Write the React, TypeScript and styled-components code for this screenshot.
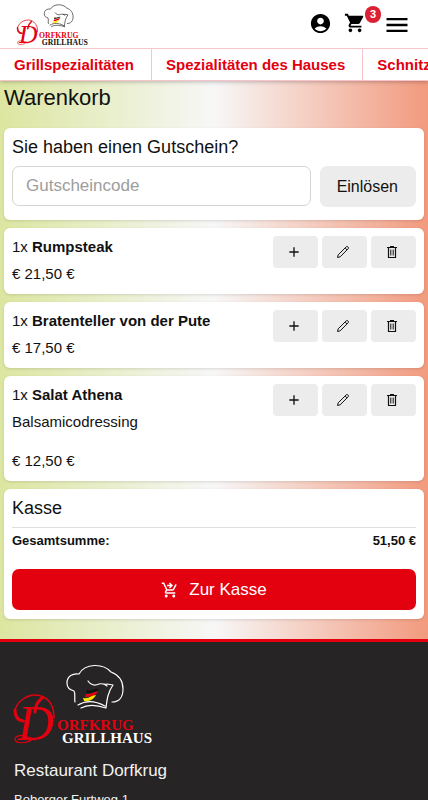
import React from "react";
import styled, { createGlobalStyle } from "styled-components";
import {
  MdAccountCircle,
  MdAdd,
  MdMenu,
  MdShoppingCart,
  MdShoppingCartCheckout,
} from "react-icons/md";

const RED = "#e3000f";
const PINK = "#f8c4cb";

const GlobalStyle = createGlobalStyle`
  *, *::before, *::after { box-sizing: border-box; }
  body {
    margin: 0;
    font-family: "Liberation Sans", Arial, sans-serif;
    color: #111;
    background: #262424;
  }
  h1, h2, h3, p, ul { margin: 0; padding: 0; font-weight: 400; }
  button, input { font-family: inherit; color: inherit; }
  a { color: inherit; text-decoration: none; }
`;

const Page = styled.div`
  height: 100vh;
  overflow: hidden;
`;

const Header = styled.header`
  position: relative;
  background: #fff;
  border-bottom: 1px solid ${PINK};
  box-shadow: 0 1px 4px rgba(0, 0, 0, 0.25);
`;

const TopBar = styled.div`
  display: flex;
  align-items: flex-start;
  justify-content: space-between;
  height: 48px;
  padding: 4px 21px 0 17px;
`;

const LogoLink = styled.a<{ $width: number }>`
  display: block;
  width: ${(p) => p.$width}px;
  svg { display: block; width: 100%; height: auto; overflow: visible; }
`;

const HeaderActions = styled.div`
  display: flex;
  align-items: center;
  gap: 12px;
  height: 38px;
`;

const IconButton = styled.button`
  position: relative;
  display: flex;
  padding: 0;
  border: 0;
  background: none;
  color: #000;
  cursor: pointer;
`;

const MenuButton = styled(IconButton)`
  margin: 4px -4px 0 5px;
`;

const Badge = styled.span`
  position: absolute;
  top: -6px;
  right: -15px;
  width: 16px;
  height: 17px;
  border-radius: 8px;
  background: #dc2232;
  color: #fff;
  font-size: 11px;
  font-weight: 700;
  line-height: 17px;
  text-align: center;
`;

const CategoryNav = styled.nav`
  display: flex;
  overflow: hidden;
  border-top: 1px solid ${PINK};
`;

const CategoryLink = styled.a`
  flex: none;
  padding: 0 17px 0 14px;
  border-right: 1px solid ${PINK};
  color: ${RED};
  font-size: 15px;
  font-weight: 700;
  line-height: 31px;
`;

const Main = styled.main`
  display: flex;
  flex-direction: column;
  gap: 8px;
  padding: 3px 4px 20px;
  background: linear-gradient(90deg, #dce6a0 0%, #f7f7f7 50%, #f29a7e 100%);
`;

const PageTitle = styled.h1`
  font-size: 22px;
  line-height: 28px;
  margin-bottom: 8px;
`;

const Card = styled.section`
  padding: 8px;
  border-radius: 6px;
  background: #fff;
  box-shadow: 0 1px 3px rgba(0, 0, 0, 0.12);
`;

const CardTitle = styled.h2`
  font-size: 18px;
  line-height: 22px;
`;

const VoucherCard = styled(Card)`
  padding-bottom: 13px;
`;

const VoucherForm = styled.form`
  display: flex;
  align-items: flex-start;
  gap: 9px;
  margin-top: 8px;
`;

const VoucherInput = styled.input`
  flex: 1;
  min-width: 0;
  height: 40px;
  padding: 0 13px;
  border: 1px solid #d4d4d4;
  border-radius: 7px;
  background: #fff;
  font-size: 17px;
  &::placeholder { color: #9d9d9d; opacity: 1; }
`;

const RedeemButton = styled.button`
  height: 41px;
  padding: 0 18px 0 17px;
  border: 0;
  border-radius: 7px;
  background: #ececec;
  font-size: 16px;
`;

const ItemCard = styled(Card)`
  display: flex;
  justify-content: space-between;
  align-items: flex-start;
`;

const ItemText = styled.div`
  padding-bottom: 1px;
  font-size: 15px;
  line-height: 22px;
`;

const ItemPrice = styled.p<{ $afterNote?: boolean }>`
  margin-top: ${(p) => (p.$afterNote ? 17 : 5)}px;
`;

const ItemNote = styled.p`
  margin-top: 5px;
`;

const ItemActions = styled.div`
  display: flex;
  gap: 4px;
`;

const ActionButton = styled.button`
  display: flex;
  align-items: center;
  justify-content: center;
  width: 45px;
  height: 32px;
  padding: 0 3px 0 0;
  border: 0;
  border-radius: 4px;
  background: #ececec;
`;

const CheckoutCard = styled(Card)`
  padding-bottom: 9px;
`;

const TotalRow = styled.div`
  display: flex;
  justify-content: space-between;
  margin-top: 8px;
  padding-top: 5px;
  border-top: 1px solid #dedede;
  font-size: 13px;
  font-weight: 700;
  line-height: 16px;
`;

const CheckoutButton = styled.button`
  display: flex;
  align-items: center;
  justify-content: center;
  gap: 10px;
  width: 100%;
  height: 41px;
  margin-top: 20px;
  border: 0;
  border-radius: 7px;
  background: ${RED};
  color: #fff;
  font-size: 17px;
`;

const Footer = styled.footer`
  padding: 22px 14px 0;
  border-top: 3px solid ${RED};
  background: #262424;
  color: #f2f2f2;
`;

const FooterTitle = styled.h3`
  margin-top: 17px;
  font-size: 17px;
  line-height: 20px;
`;

const FooterText = styled.p`
  margin-top: 11px;
  font-size: 13px;
  line-height: 16px;
`;

function Logo({ ink, width }: { ink: string; width: number }) {
  return (
    <LogoLink href="#" $width={width} aria-label="Dorfkrug Grillhaus">
      <svg viewBox="0 0 140 80" fill="none">
        <g stroke={ink} strokeWidth="1.2" strokeLinecap="round" strokeLinejoin="round">
          <path d="M61 38 C60 34 62 30 60 27 C56 26 53 24 53 19 C53 12 59 9 65 10 C71 -1 89 -1 97 8 C105 11 109 17 109 25 C109 33 105 38 98 38" />
          <path d="M74 17 C77 21 81 22 85 20 C88 19 90 21 93 20 L99 21 C94 28 93 35 92 44 M64 41 C72 36 82 37 91 42 M67 44 C74 40 83 41 92 44 M93 22 L90 20" />
        </g>
        <path d="M73 26 C78 28 80 24 85 25 C82 28 77 29 72 29Z" fill="#111" />
        <path d="M72 30 C77 31 80 27 84 28 C81 32 76 33 71 33Z" fill={RED} />
        <path d="M69 34 C75 35 78 31 82 31 C80 35 75 38 70 37Z" fill="#ffe100" />
        <g fontFamily='"Liberation Serif", serif' fill={RED}>
          <text x="4" y="76" fontSize="50" fontStyle="italic">D</text>
          <text x="43" y="66" fontSize="15" fontWeight="700">ORFKRUG</text>
          <text x="48" y="79" fontSize="15" fontWeight="700" fill={ink}>GRILLHAUS</text>
        </g>
        <g stroke={RED} strokeLinecap="round">
          <path d="M15 52 C13 60 2 59 1 50 C0 38 15 28 27 32 C36 35 40 43 40 54" strokeWidth="1.4" />
          <path d="M1 46 C1 53 4 56 9 57" strokeWidth="3" />
          <path d="M28 34 C22 39 22 42 21 48" strokeWidth="3" />
          <path d="M19 75 C12 80 1 80 1 75 C2 70 12 71 21 76" strokeWidth="1.2" />
        </g>
      </svg>
    </LogoLink>
  );
}

function PencilIcon() {
  return (
    <svg width="14" height="14" viewBox="0 0 14 14" fill="none" stroke="#111" strokeWidth="1" strokeLinejoin="round" aria-hidden="true">
      <path d="M1.5 12.5 L2.2 9.8 L10.3 1.8 Q11 1.1 11.8 1.8 L12.2 2.2 Q12.9 3 12.2 3.7 L4.2 11.8 Z M9.1 3 L11 4.9" />
    </svg>
  );
}

function TrashIcon() {
  return (
    <svg width="12" height="14" viewBox="0 0 12 14" fill="none" stroke="#111" aria-hidden="true">
      <path d="M1 2.5 H11 M4 1.5 H8 M2.5 2.5 V12.5 H9.5 V2.5" strokeWidth="1.2" />
      <path d="M4.8 4.5 V10.5 M7.2 4.5 V10.5" strokeWidth="1" />
    </svg>
  );
}

type Item = { name: string; price: string; note?: string };

const items: Item[] = [
  { name: "Rumpsteak", price: "21,50 €" },
  { name: "Bratenteller von der Pute", price: "17,50 €" },
  { name: "Salat Athena", price: "12,50 €", note: "Balsamicodressing" },
];

const categories = ["Grillspezialitäten", "Spezialitäten des Hauses", "Schnitzel"];

function CartItem({ name, price, note }: Item) {
  return (
    <ItemCard>
      <ItemText>
        <p>1x <b>{name}</b></p>
        {note && <ItemNote>{note}</ItemNote>}
        <ItemPrice $afterNote={!!note}>€ {price}</ItemPrice>
      </ItemText>
      <ItemActions>
        <ActionButton type="button" aria-label={`${name} hinzufügen`}><MdAdd size={16} /></ActionButton>
        <ActionButton type="button" aria-label={`${name} bearbeiten`}><PencilIcon /></ActionButton>
        <ActionButton type="button" aria-label={`${name} löschen`}><TrashIcon /></ActionButton>
      </ItemActions>
    </ItemCard>
  );
}

export default function App() {
  return (
    <Page>
      <GlobalStyle />
      <Header>
        <TopBar>
          <Logo ink="#111" width={72} />
          <HeaderActions>
            <IconButton type="button" aria-label="Konto"><MdAccountCircle size={23} /></IconButton>
            <IconButton type="button" aria-label="Warenkorb, 3 Artikel">
              <MdShoppingCart size={22} />
              <Badge>3</Badge>
            </IconButton>
            <MenuButton type="button" aria-label="Menü"><MdMenu size={28} /></MenuButton>
          </HeaderActions>
        </TopBar>
        <CategoryNav>
          {categories.map((c) => <CategoryLink key={c} href="#">{c}</CategoryLink>)}
        </CategoryNav>
      </Header>
      <Main>
        <PageTitle>Warenkorb</PageTitle>
        <VoucherCard>
          <CardTitle as="label" htmlFor="voucher">Sie haben einen Gutschein?</CardTitle>
          <VoucherForm onSubmit={(e) => e.preventDefault()}>
            <VoucherInput id="voucher" type="text" placeholder="Gutscheincode" />
            <RedeemButton type="submit">Einlösen</RedeemButton>
          </VoucherForm>
        </VoucherCard>
        {items.map((item) => <CartItem key={item.name} {...item} />)}
        <CheckoutCard>
          <CardTitle>Kasse</CardTitle>
          <TotalRow><span>Gesamtsumme:</span><span>51,50 €</span></TotalRow>
          <CheckoutButton type="button"><MdShoppingCartCheckout size={18} />Zur Kasse</CheckoutButton>
        </CheckoutCard>
      </Main>
      <Footer>
        <Logo ink="#fff" width={140} />
        <FooterTitle>Restaurant Dorfkrug</FooterTitle>
        <FooterText>Boberger Furtweg 1</FooterText>
      </Footer>
    </Page>
  );
}
